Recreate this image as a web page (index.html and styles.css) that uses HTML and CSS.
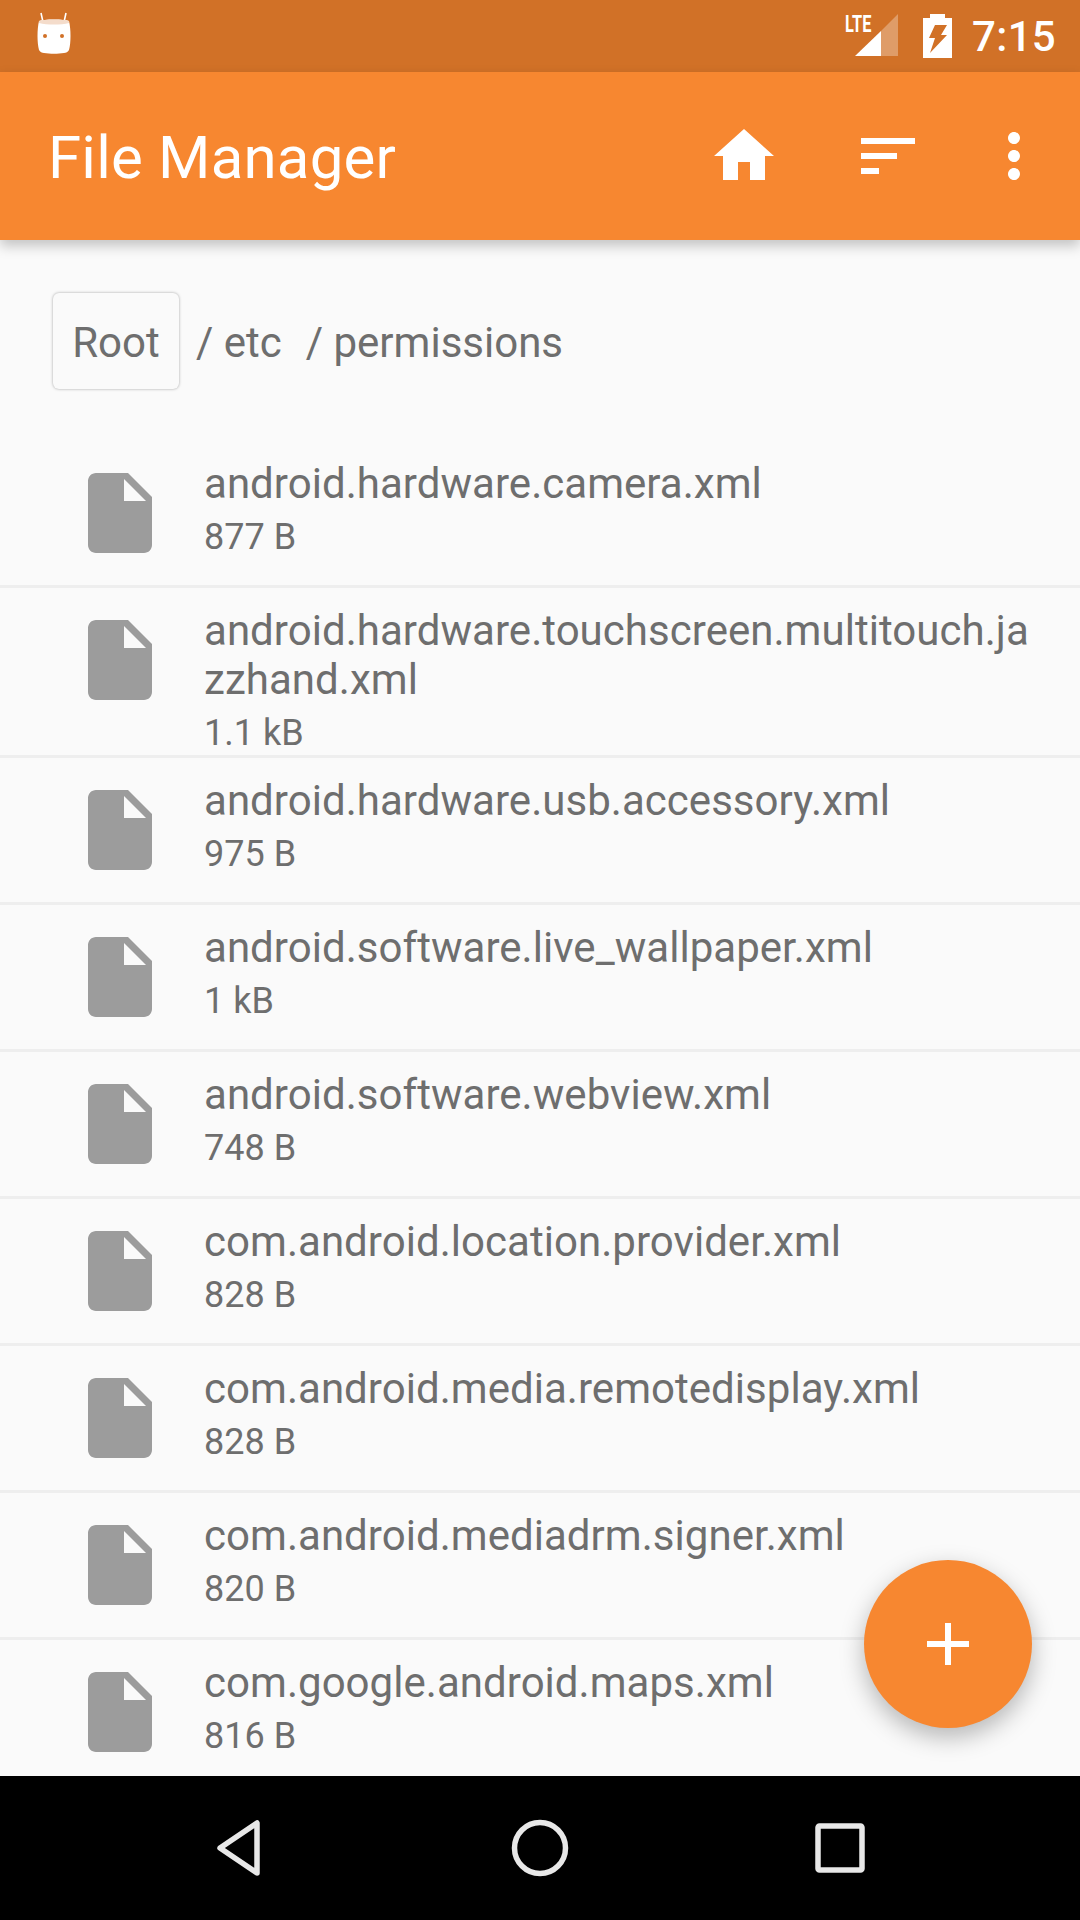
FILE: index.html
```html
<!DOCTYPE html>
<html lang="en">
<head>
    <meta charset="UTF-8">
    <meta name="viewport" content="width=device-width, initial-scale=1.0">
    <title>File Manager</title>
    <link rel="stylesheet" href="styles.css">
</head>
<body>
    <div class="screen">
        <div class="status-bar">
            <svg class="status-robot" viewBox="0 0 36 42">
                <path d="M5 1l2 9M30 1l-2 9" stroke="#fff" stroke-width="1.6" fill="none"/>
                <path d="M3 9c4-2 26-2 30 0 2 8 2 22 0 29-1 2-3 3-5 3-6 1-14 1-20 0-2 0-4-1-5-3C1 31 1 17 3 9z" fill="#fff"/>
                <path d="M3 9c4-2 26-2 30 0v2c-8 2-22 2-30 0z" fill="#f4dccb"/>
                <circle cx="9" cy="24" r="2" fill="#d17127"/>
                <circle cx="26" cy="24" r="2" fill="#d17127"/>
            </svg>
            <div class="status-right">
                <div class="signal">
                    <span class="lte">LTE</span>
                    <svg class="signal-bars" viewBox="0 0 43 42">
                        <path d="M43 0v42H26V17z" fill="#fff" opacity=".3"/>
                        <path d="M26 17v25H0z" fill="#fff"/>
                    </svg>
                </div>
                <svg class="battery" viewBox="0 0 29 44">
                    <path d="M7 0h15v4h7v40H0V4h7z" fill="#fff"/>
                    <path d="M12 11h12l-6 10h6L7 39l5-15H6z" fill="#d17127"/>
                </svg>
                <span class="clock">7:15</span>
            </div>
        </div>

        <header class="toolbar">
            <h1>File Manager</h1>
            <button class="action">
                <svg viewBox="0 0 24 24"><path d="M10 20v-6h4v6h5v-8h3L12 3 2 12h3v8z"/></svg>
            </button>
            <button class="action">
                <svg viewBox="0 0 24 24"><path d="M3 18h6v-2H3v2zM3 6v2h18V6H3zm0 7h12v-2H3v2z"/></svg>
            </button>
            <button class="action action-more">
                <svg viewBox="0 0 24 24"><path d="M12 8c1.1 0 2-.9 2-2s-.9-2-2-2-2 .9-2 2 .9 2 2 2zm0 2c-1.1 0-2 .9-2 2s.9 2 2 2 2-.9 2-2-.9-2-2-2zm0 6c-1.1 0-2 .9-2 2s.9 2 2 2 2-.9 2-2-.9-2-2-2z"/></svg>
            </button>
        </header>

        <main class="content">
            <div class="breadcrumb">
                <span class="crumb-root">Root</span>
                <span class="crumb">/ etc</span>
                <span class="crumb">/ permissions</span>
            </div>

            <div class="file-list">
                <div class="file-item">
                    <svg class="file-icon" viewBox="0 0 24 24"><path d="M6 2c-1.1 0-2 .9-2 2v16c0 1.1.9 2 2 2h12c1.100 0 2-.9 2-2V8l-6-6H6zm7 7V3.500L18.500 9H13z"/></svg>
                    <div class="file-text">
                        <div class="file-name">android.hardware.camera.xml</div>
                        <div class="file-size">877 B</div>
                    </div>
                </div>
                <div class="file-item">
                    <svg class="file-icon" viewBox="0 0 24 24"><path d="M6 2c-1.1 0-2 .9-2 2v16c0 1.1.9 2 2 2h12c1.100 0 2-.9 2-2V8l-6-6H6zm7 7V3.500L18.500 9H13z"/></svg>
                    <div class="file-text">
                        <div class="file-name">android.hardware.touchscreen.multitouch.jazzhand.xml</div>
                        <div class="file-size">1.1 kB</div>
                    </div>
                </div>
                <div class="file-item">
                    <svg class="file-icon" viewBox="0 0 24 24"><path d="M6 2c-1.1 0-2 .9-2 2v16c0 1.1.9 2 2 2h12c1.100 0 2-.9 2-2V8l-6-6H6zm7 7V3.500L18.500 9H13z"/></svg>
                    <div class="file-text">
                        <div class="file-name">android.hardware.usb.accessory.xml</div>
                        <div class="file-size">975 B</div>
                    </div>
                </div>
                <div class="file-item">
                    <svg class="file-icon" viewBox="0 0 24 24"><path d="M6 2c-1.1 0-2 .9-2 2v16c0 1.1.9 2 2 2h12c1.100 0 2-.9 2-2V8l-6-6H6zm7 7V3.500L18.500 9H13z"/></svg>
                    <div class="file-text">
                        <div class="file-name">android.software.live_wallpaper.xml</div>
                        <div class="file-size">1 kB</div>
                    </div>
                </div>
                <div class="file-item">
                    <svg class="file-icon" viewBox="0 0 24 24"><path d="M6 2c-1.1 0-2 .9-2 2v16c0 1.1.9 2 2 2h12c1.100 0 2-.9 2-2V8l-6-6H6zm7 7V3.500L18.500 9H13z"/></svg>
                    <div class="file-text">
                        <div class="file-name">android.software.webview.xml</div>
                        <div class="file-size">748 B</div>
                    </div>
                </div>
                <div class="file-item">
                    <svg class="file-icon" viewBox="0 0 24 24"><path d="M6 2c-1.1 0-2 .9-2 2v16c0 1.1.9 2 2 2h12c1.100 0 2-.9 2-2V8l-6-6H6zm7 7V3.500L18.500 9H13z"/></svg>
                    <div class="file-text">
                        <div class="file-name">com.android.location.provider.xml</div>
                        <div class="file-size">828 B</div>
                    </div>
                </div>
                <div class="file-item">
                    <svg class="file-icon" viewBox="0 0 24 24"><path d="M6 2c-1.1 0-2 .9-2 2v16c0 1.1.9 2 2 2h12c1.100 0 2-.9 2-2V8l-6-6H6zm7 7V3.500L18.500 9H13z"/></svg>
                    <div class="file-text">
                        <div class="file-name">com.android.media.remotedisplay.xml</div>
                        <div class="file-size">828 B</div>
                    </div>
                </div>
                <div class="file-item">
                    <svg class="file-icon" viewBox="0 0 24 24"><path d="M6 2c-1.1 0-2 .9-2 2v16c0 1.1.9 2 2 2h12c1.100 0 2-.9 2-2V8l-6-6H6zm7 7V3.500L18.500 9H13z"/></svg>
                    <div class="file-text">
                        <div class="file-name">com.android.mediadrm.signer.xml</div>
                        <div class="file-size">820 B</div>
                    </div>
                </div>
                <div class="file-item">
                    <svg class="file-icon" viewBox="0 0 24 24"><path d="M6 2c-1.1 0-2 .9-2 2v16c0 1.1.9 2 2 2h12c1.100 0 2-.9 2-2V8l-6-6H6zm7 7V3.500L18.500 9H13z"/></svg>
                    <div class="file-text">
                        <div class="file-name">com.google.android.maps.xml</div>
                        <div class="file-size">816 B</div>
                    </div>
                </div>
            </div>

            <button class="fab">
                <svg viewBox="0 0 24 24"><path d="M19 13h-6v6h-2v-6H5v-2h6V5h2v6h6v2z"/></svg>
            </button>
        </main>

        <nav class="nav-bar">
            <svg class="nav-icon" viewBox="0 0 60 60">
                <path d="M47 5v50L10 30z" fill="none" stroke="#e8e8e8" stroke-width="5.500" stroke-linejoin="round"/>
            </svg>
            <svg class="nav-icon" viewBox="0 0 60 60">
                <circle cx="30" cy="30" r="25.500" fill="none" stroke="#e8e8e8" stroke-width="5.500"/>
            </svg>
            <svg class="nav-icon" viewBox="0 0 60 60">
                <rect x="8" y="8" width="44" height="44" rx="1.500" fill="none" stroke="#e8e8e8" stroke-width="5.500"/>
            </svg>
        </nav>
    </div>
</body>
</html>
```

FILE: styles.css
```css
body {
    font-family: Roboto, Arial, sans-serif;
    margin: 0;
    padding: 0;
}

.screen {
    display: flex;
    flex-direction: column;
    width: 1080px;
    height: 1920px;
    overflow: hidden;
    background-color: #fafafa;
}

/* Status bar */
.status-bar {
    display: flex;
    align-items: center;
    justify-content: space-between;
    height: 72px;
    flex-shrink: 0;
    padding: 0 24px 0 36px;
    box-sizing: border-box;
    background-color: #d17127;
    color: white;
}

.status-robot {
    width: 36px;
    height: 42px;
    margin-top: -6px;
}

.status-right {
    display: flex;
    align-items: center;
}

.signal {
    display: flex;
    align-items: flex-start;
    position: relative;
    width: 53px;
    height: 44px;
    justify-content: flex-end;
    margin-right: 25px;
    margin-top: -1px;
}

.signal-bars {
    width: 43px;
    height: 42px;
}

.lte {
    position: absolute;
    top: 0;
    left: 0;
    font-size: 24px;
    line-height: 20px;
    font-weight: 700;
    transform: scaleX(.68);
    transform-origin: left top;
}

.battery {
    width: 29px;
    height: 44px;
    margin-right: 20px;
}

.clock {
    font-size: 42px;
    font-weight: 500;
    letter-spacing: .3px;
}

/* Toolbar */
.toolbar {
    display: flex;
    align-items: center;
    height: 168px;
    flex-shrink: 0;
    padding: 0 12px 0 48px;
    box-sizing: border-box;
    background-color: #f78730;
    color: white;
    box-shadow: 0 6px 12px rgba(0, 0, 0, 0.22);
    position: relative;
    z-index: 2;
}

.toolbar h1 {
    flex: 1;
    margin: 0;
    padding-top: 2px;
    font-size: 60px;
    font-weight: 400;
    letter-spacing: .2px;
}

.action {
    display: flex;
    align-items: center;
    justify-content: center;
    width: 144px;
    height: 168px;
    padding: 0;
    border: none;
    background: none;
}

.action svg {
    width: 72px;
    height: 72px;
    fill: white;
}

.action-more {
    width: 108px;
}

/* Breadcrumb + list */
.content {
    flex: 1;
    position: relative;
    overflow: hidden;
}

.breadcrumb {
    display: flex;
    align-items: center;
    height: 201px;
    padding-left: 53px;
    box-sizing: border-box;
    font-size: 42px;
    color: #6e6e6e;
}

.crumb-root {
    display: flex;
    align-items: center;
    justify-content: center;
    width: 126px;
    height: 96px;
    padding-top: 3px;
    box-sizing: border-box;
    border-radius: 6px;
    box-shadow: 0 0 3px rgba(0, 0, 0, 0.35);
    margin-right: 17px;
}

.crumb {
    padding-top: 3px;
    margin-right: 24px;
}

.file-item {
    display: flex;
    align-items: flex-start;
    padding: 18px 36px 1px 72px;
    min-height: 147px;
    box-sizing: border-box;
    border-bottom: 3px solid #eeeeee;
}

.file-icon {
    width: 96px;
    height: 96px;
    flex-shrink: 0;
    margin: 6px 36px 0 0;
    fill: #9c9c9c;
}

.file-text {
    flex: 1;
    min-width: 0;
}

.file-name {
    font-size: 42px;
    line-height: 49px;
    letter-spacing: .04px;
    color: #6e6e6e;
    word-break: break-all;
}

.file-size {
    font-size: 36px;
    line-height: 42px;
    margin-top: 8px;
    color: #6e6e6e;
}

.fab {
    position: absolute;
    top: 1320px;
    left: 864px;
    display: flex;
    align-items: center;
    justify-content: center;
    width: 168px;
    height: 168px;
    padding: 0;
    border: none;
    border-radius: 50%;
    background-color: #f78730;
    box-shadow: 0 9px 24px rgba(0, 0, 0, 0.28);
}

.fab svg {
    width: 72px;
    height: 72px;
    fill: white;
}

/* Navigation bar */
.nav-bar {
    display: grid;
    grid-template-columns: repeat(3, 300px);
    justify-items: center;
    align-items: center;
    height: 144px;
    flex-shrink: 0;
    padding: 0 90px;
    box-sizing: border-box;
    background-color: black;
}

.nav-icon {
    width: 60px;
    height: 60px;
}
```
